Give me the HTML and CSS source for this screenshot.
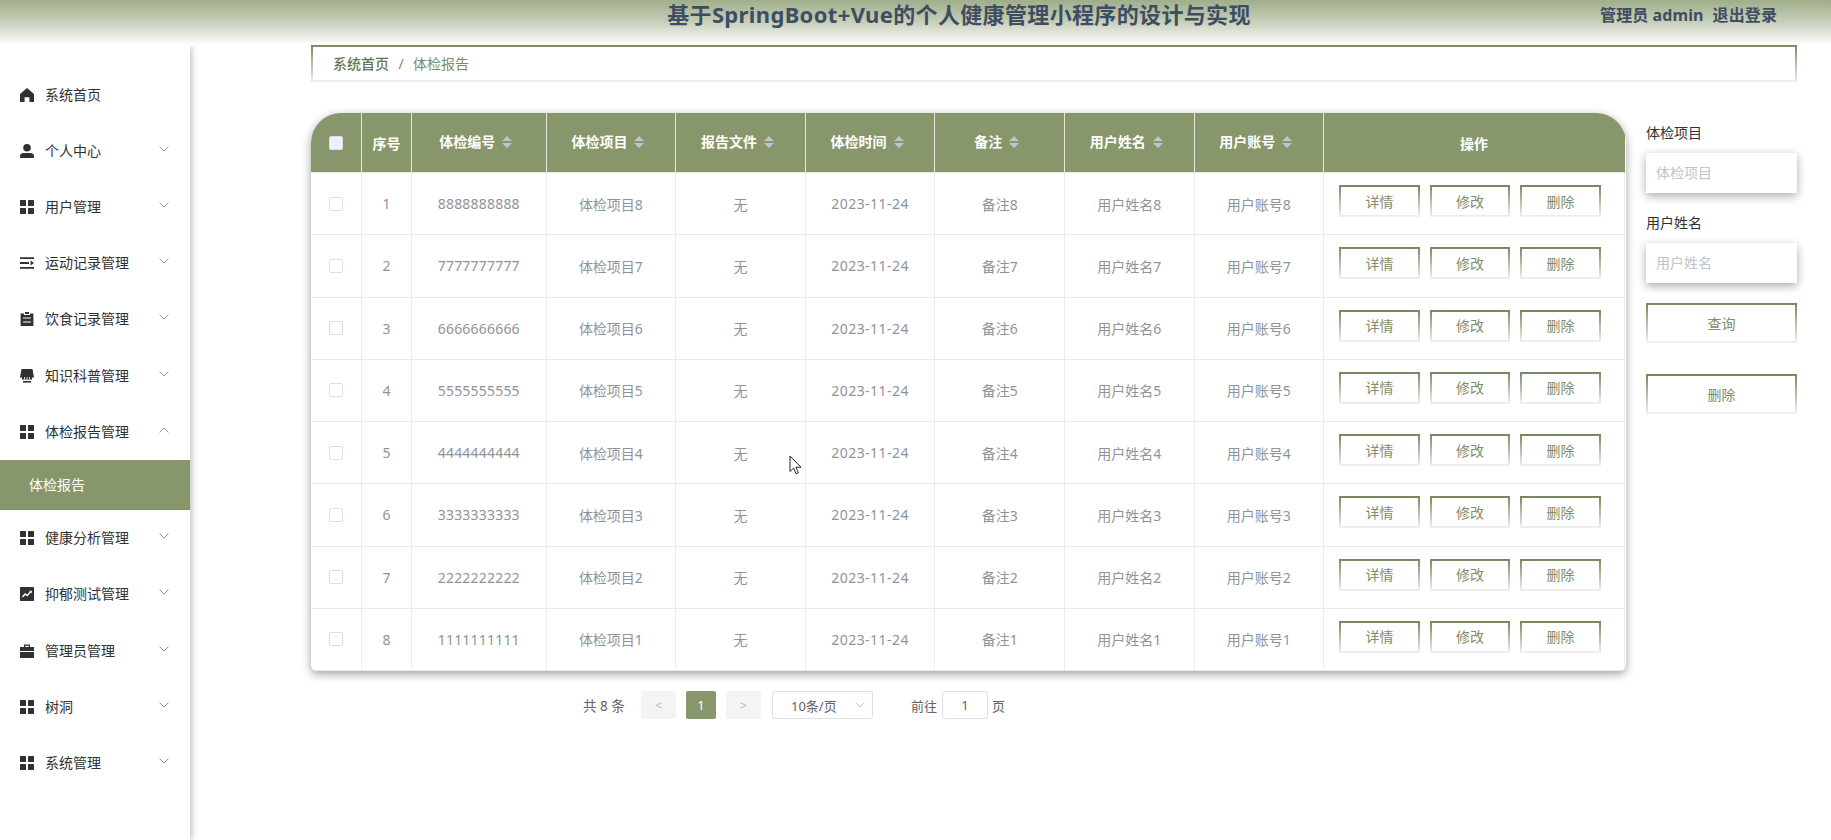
FILE: index.html
```html
<!DOCTYPE html>
<html lang="zh-CN">
<head>
  <meta charset="UTF-8" />
  <meta name="viewport" content="width=device-width, initial-scale=1.0" />
  <title>体检报告</title>
  <link rel="stylesheet" href="styles.css">
</head>
<body>
  <svg class="sprite">
    <symbol id="i-home" viewBox="0 0 14 14"><path d="M7 0 0 6v8h4.6V9.2h4.8V14H14V6z"/></symbol>
    <symbol id="i-user" viewBox="0 0 14 14"><circle cx="7" cy="3.8" r="3.8"/><path d="M0 14v-1.6C0 10 1.6 9 3.6 9h6.8c2 0 3.6 1 3.6 3.4V14z"/></symbol>
    <symbol id="i-grid" viewBox="0 0 14 14"><rect width="6" height="6" rx=".6"/><rect x="8" width="6" height="6" rx=".6"/><rect y="8" width="6" height="6" rx=".6"/><rect x="8" y="8" width="6" height="6" rx=".6"/></symbol>
    <symbol id="i-list" viewBox="0 0 14 14"><path d="M0 1.2h14V3H0zM0 6.1h9V8H0zM0 11h14v1.8H0zM10.6 4.6 14 7l-3.4 2.4z"/></symbol>
    <symbol id="i-order" viewBox="0 0 14 14"><path d="M.6 1.4H4V3h6V1.4h3.4V14H.6z"/><path d="M5 0h4v2H5z"/><path d="M3 6h8M3 10h8" stroke="#fff" stroke-width="1.2"/></symbol>
    <symbol id="i-goods" viewBox="0 0 14 14"><path d="M1.5 0h11L14 8.6H0z"/><path d="M2 8h10v2.6H2z"/><path d="M3 12h8v1.6H3z"/><path d="M4.5 8v2.5M7 8v2.5M9.5 8v2.5" stroke="#fff" stroke-width=".8"/></symbol>
    <symbol id="i-chart" viewBox="0 0 14 14"><rect width="14" height="14" rx=".5"/><path d="m2.4 10 2.7-3 2 1.6L10.4 5" fill="none" stroke="#fff" stroke-width="1.4"/><path d="M9.2 3.8h2.6v2.6z" fill="#fff"/></symbol>
    <symbol id="i-case" viewBox="0 0 14 14"><path d="M4 3V.4h6V3h4v4H0V3zm1.3 0h3.4V1.7H5.3zM0 8h14v6H0z" fill-rule="evenodd"/></symbol>
    <symbol id="i-down" viewBox="0 0 10 6"><path d="m.6.6 4.4 4.4L9.4.6" fill="none" stroke="currentColor"/></symbol>
    <symbol id="i-up" viewBox="0 0 10 6"><path d="M.6 5.4 5 1l4.4 4.4" fill="none" stroke="currentColor"/></symbol>
    <symbol id="i-sort" viewBox="0 0 10 12"><path d="M0 5 5 0l5 5zM0 7h10l-5 5z"/></symbol>
  </svg>

  <header class="header">
    <div class="title">基于SpringBoot+Vue的个人健康管理小程序的设计与实现</div>
    <div class="account"><span>管理员 admin</span><span>退出登录</span></div>
  </header>

  <div class="container">
    <nav class="sidebar">
      <div class="menu-item"><svg class="icon"><use href="#i-home"/></svg>系统首页</div>
      <div class="menu-item"><svg class="icon"><use href="#i-user"/></svg>个人中心<svg class="arrow"><use href="#i-down"/></svg></div>
      <div class="menu-item"><svg class="icon"><use href="#i-grid"/></svg>用户管理<svg class="arrow"><use href="#i-down"/></svg></div>
      <div class="menu-item"><svg class="icon"><use href="#i-list"/></svg>运动记录管理<svg class="arrow"><use href="#i-down"/></svg></div>
      <div class="menu-item"><svg class="icon"><use href="#i-order"/></svg>饮食记录管理<svg class="arrow"><use href="#i-down"/></svg></div>
      <div class="menu-item"><svg class="icon"><use href="#i-goods"/></svg>知识科普管理<svg class="arrow"><use href="#i-down"/></svg></div>
      <div class="menu-item"><svg class="icon"><use href="#i-grid"/></svg>体检报告管理<svg class="arrow"><use href="#i-up"/></svg></div>
      <div class="submenu-item">体检报告</div>
      <div class="menu-item"><svg class="icon"><use href="#i-grid"/></svg>健康分析管理<svg class="arrow"><use href="#i-down"/></svg></div>
      <div class="menu-item"><svg class="icon"><use href="#i-chart"/></svg>抑郁测试管理<svg class="arrow"><use href="#i-down"/></svg></div>
      <div class="menu-item"><svg class="icon"><use href="#i-case"/></svg>管理员管理<svg class="arrow"><use href="#i-down"/></svg></div>
      <div class="menu-item"><svg class="icon"><use href="#i-grid"/></svg>树洞<svg class="arrow"><use href="#i-down"/></svg></div>
      <div class="menu-item"><svg class="icon"><use href="#i-grid"/></svg>系统管理<svg class="arrow"><use href="#i-down"/></svg></div>
    </nav>

    <main class="main">
      <div class="breadcrumb"><b>系统首页</b><span class="slash">/</span><span>体检报告</span></div>

      <div class="content">
        <div class="list">
          <div class="table-box">
            <table class="table">
              <colgroup>
                <col class="w-check"><col class="w-index"><col class="w-code">
                <col class="w-col"><col class="w-col"><col class="w-col"><col class="w-col"><col class="w-col"><col class="w-col">
                <col>
              </colgroup>
              <thead>
                <tr>
                  <th><i class="checkbox"></i></th>
                  <th>序号</th>
                  <th class="sortable">体检编号<svg class="sort"><use href="#i-sort"/></svg></th>
                  <th class="sortable">体检项目<svg class="sort"><use href="#i-sort"/></svg></th>
                  <th class="sortable">报告文件<svg class="sort"><use href="#i-sort"/></svg></th>
                  <th class="sortable">体检时间<svg class="sort"><use href="#i-sort"/></svg></th>
                  <th class="sortable">备注<svg class="sort"><use href="#i-sort"/></svg></th>
                  <th class="sortable">用户姓名<svg class="sort"><use href="#i-sort"/></svg></th>
                  <th class="sortable">用户账号<svg class="sort"><use href="#i-sort"/></svg></th>
                  <th>操作</th>
                </tr>
              </thead>
              <tbody>
                <tr><td><i class="checkbox"></i></td><td>1</td><td class="num">8888888888</td><td>体检项目8</td><td>无</td><td class="date">2023-11-24</td><td>备注8</td><td>用户姓名8</td><td>用户账号8</td><td><div class="ops"><button>详情</button><button>修改</button><button>删除</button></div></td></tr>
                <tr><td><i class="checkbox"></i></td><td>2</td><td class="num">7777777777</td><td>体检项目7</td><td>无</td><td class="date">2023-11-24</td><td>备注7</td><td>用户姓名7</td><td>用户账号7</td><td><div class="ops"><button>详情</button><button>修改</button><button>删除</button></div></td></tr>
                <tr><td><i class="checkbox"></i></td><td>3</td><td class="num">6666666666</td><td>体检项目6</td><td>无</td><td class="date">2023-11-24</td><td>备注6</td><td>用户姓名6</td><td>用户账号6</td><td><div class="ops"><button>详情</button><button>修改</button><button>删除</button></div></td></tr>
                <tr><td><i class="checkbox"></i></td><td>4</td><td class="num">5555555555</td><td>体检项目5</td><td>无</td><td class="date">2023-11-24</td><td>备注5</td><td>用户姓名5</td><td>用户账号5</td><td><div class="ops"><button>详情</button><button>修改</button><button>删除</button></div></td></tr>
                <tr><td><i class="checkbox"></i></td><td>5</td><td class="num">4444444444</td><td>体检项目4</td><td>无</td><td class="date">2023-11-24</td><td>备注4</td><td>用户姓名4</td><td>用户账号4</td><td><div class="ops"><button>详情</button><button>修改</button><button>删除</button></div></td></tr>
                <tr><td><i class="checkbox"></i></td><td>6</td><td class="num">3333333333</td><td>体检项目3</td><td>无</td><td class="date">2023-11-24</td><td>备注3</td><td>用户姓名3</td><td>用户账号3</td><td><div class="ops"><button>详情</button><button>修改</button><button>删除</button></div></td></tr>
                <tr><td><i class="checkbox"></i></td><td>7</td><td class="num">2222222222</td><td>体检项目2</td><td>无</td><td class="date">2023-11-24</td><td>备注2</td><td>用户姓名2</td><td>用户账号2</td><td><div class="ops"><button>详情</button><button>修改</button><button>删除</button></div></td></tr>
                <tr><td><i class="checkbox"></i></td><td>8</td><td class="num">1111111111</td><td>体检项目1</td><td>无</td><td class="date">2023-11-24</td><td>备注1</td><td>用户姓名1</td><td>用户账号1</td><td><div class="ops"><button>详情</button><button>修改</button><button>删除</button></div></td></tr>
              </tbody>
            </table>
          </div>

          <div class="pagination">
            <span class="total">共 8 条</span>
            <span class="page-btn">&lt;</span>
            <span class="page-btn active">1</span>
            <span class="page-btn">&gt;</span>
            <span class="page-size">10条/页<svg class="arrow"><use href="#i-down"/></svg></span>
            <span class="jump">前往<span class="jump-input">1</span>页</span>
          </div>
        </div>

        <aside class="search">
          <label>体检项目</label>
          <input type="text" placeholder="体检项目">
          <label>用户姓名</label>
          <input type="text" placeholder="用户姓名">
          <button>查询</button>
          <button>删除</button>
        </aside>
      </div>
    </main>
  </div>

  <svg class="cursor" viewBox="0 0 13 20"><path d="M1 1v15.5l3.6-3.4 2.5 5.6 2.3-1-2.5-5.5H12z"/></svg>
</body>
</html>
```
FILE: styles.css
```css
* {
  box-sizing: border-box;
}
body {
  margin: 0;
  height: 840px;
  overflow: hidden;
  background: #fff;
  color: #303133;
  font-family: "Noto Sans", "Noto Sans CJK SC", sans-serif;
  font-size: 14px;
}
button, input {
  font-family: inherit;
  font-size: 14px;
}
.sprite {
  display: none;
}

/* header */
.header {
  display: grid;
  grid-template-columns: 1fr auto 1fr;
  height: 45px;
  padding: 0 54px 0 141px;
  background: linear-gradient(180deg, #a0ae8b 0%, #c3ccb5 45%, #e4e7df 75%, #fff 100%);
  color: #3f4d63;
  font-weight: bold;
  line-height: 30px;
}
.title {
  grid-column: 2;
  font-size: 22px;
  letter-spacing: .35px;
  line-height: 29px;
  white-space: nowrap;
}
.account {
  display: flex;
  justify-content: flex-end;
  gap: 9px;
  font-size: 16px;
  letter-spacing: .1px;
}

.container {
  display: flex;
  height: 795px;
}

/* sidebar */
.sidebar {
  width: 190px;
  padding-top: 20.5px;
  margin-top: 1px;
  box-shadow: 1px 0 7px rgba(0, 0, 0, .3);
  clip-path: inset(0 -12px 0 0);
}
.menu-item {
  display: flex;
  align-items: center;
  height: 56.2px;
  padding: 0 21px 0 20px;
  line-height: 20px;
}
.icon {
  width: 14px;
  height: 14px;
  margin-right: 11px;
  fill: #303133;
}
.arrow {
  width: 10px;
  height: 6px;
  margin: 0 0 4px auto;
  color: #909399;
}
.submenu-item {
  height: 50.4px;
  padding-left: 29px;
  background: #87966b;
  color: #fff;
  line-height: 49px;
}

/* main */
.main {
  width: 1486px;
  margin-left: 121px;
}
.breadcrumb {
  display: flex;
  height: 37px;
  padding-left: 20px;
  border: 2px solid;
  border-image: linear-gradient(180deg, #7b8b5e, #eee) 2;
  color: #7b8b69;
  line-height: 33px;
}
.breadcrumb b {
  font-weight: 500;
  color: #64754c;
}
.slash {
  width: 24px;
  text-align: center;
}
.content {
  display: flex;
  justify-content: space-between;
  margin-top: 31px;
}

/* table */
.table-box {
  width: 1315px;
  height: 558px;
  overflow: hidden;
  border-radius: 30px 30px 6px 6px;
  background: #fff;
  box-shadow: 0 3px 10px rgba(0, 0, 0, .38);
}
.table {
  width: 1314px;
  table-layout: fixed;
  border-collapse: separate;
  border-spacing: 0;
  color: #909399;
  text-align: center;
}
.w-check { width: 51px; }
.w-index { width: 50px; }
.w-code { width: 134.6px; }
.w-col { width: 129.6px; }
.table th, .table td {
  padding: 0;
  border-right: 1px solid #ebeef0;
  border-bottom: 1px solid #ebebee;
}
.table th {
  height: 60px;
  background: #87966b;
  border-right-color: #e2e7da;
  color: #fff;
}
.table th.sortable {
  padding: 0 6px 3px 0;
}
.table th:last-child {
  border-right-color: #87966b;
}
.table td {
  height: 62.25px;
}
.num {
  letter-spacing: .2px;
}
.date {
  letter-spacing: .45px;
}
.sort {
  width: 10px;
  height: 12px;
  margin-left: 7px;
  vertical-align: -1px;
  fill: #c0c4cc;
}
.checkbox {
  display: block;
  width: 14px;
  height: 14px;
  margin: 0 auto;
  border: 1px solid #dcdfe6;
  border-radius: 2px;
  background: #fff;
}
.table th .checkbox {
  background: #edf0fc;
}
.ops {
  display: flex;
  gap: 10px;
  margin: -5px 0 0 15px;
}
.ops button, .search button {
  border: 2px solid;
  border-image: linear-gradient(180deg, #75865a, #f2f2f2) 2;
  background: #fff;
  color: #7f8e6c;
}
.ops button {
  width: 80.5px;
  height: 32px;
  padding: 0 0 1px;
}

/* pagination */
.pagination {
  display: flex;
  align-items: center;
  margin: 20px 0 0 272px;
  height: 28px;
  color: #606266;
  font-size: 13px;
}
.total {
  width: 58px;
  font-size: 13.5px;
  white-space: nowrap;
}
.page-btn {
  width: 35px;
  height: 28px;
  margin-right: 10px;
  border-radius: 2px;
  background: #f4f4f5;
  color: #b8bbc2;
  line-height: 28px;
  text-align: center;
}
.page-btn.active {
  width: 30px;
  background: #87966b;
  color: #fff;
}
.page-size {
  display: flex;
  align-items: center;
  width: 101px;
  height: 28px;
  margin-left: 1px;
  padding: 0 7px 0 18px;
  border: 1px solid #dcdfe6;
  border-radius: 3px;
}
.page-size .arrow {
  margin-bottom: 0;
  color: #c0c4cc;
}
.jump {
  display: flex;
  align-items: center;
  margin-left: 38px;
}
.jump-input {
  width: 46px;
  height: 28px;
  margin: 0 4px 0 5px;
  border: 1px solid #dcdfe6;
  border-radius: 3px;
  line-height: 26px;
  text-align: center;
}

/* search */
.search {
  display: flex;
  flex-direction: column;
  width: 151px;
}
.search label {
  height: 40px;
  line-height: 39px;
}
.search input {
  height: 40px;
  margin-bottom: 10px;
  padding: 0 10px 2px;
  border: 0;
  background: #fff;
  box-shadow: 0 3px 9px rgba(0, 0, 0, .33);
}
.search input::placeholder {
  color: #c0c4cc;
}
.search button {
  height: 40px;
  margin: 10px 0 20.5px;
}

.cursor {
  position: absolute;
  left: 789px;
  top: 455px;
  width: 13px;
  height: 20px;
  fill: #fff;
  stroke: #222;
}
```
